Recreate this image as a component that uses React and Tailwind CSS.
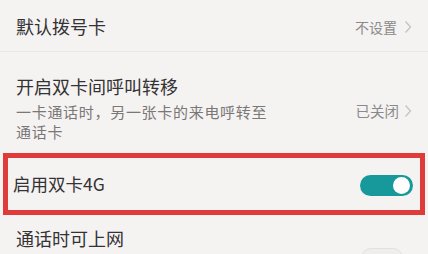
export default function App() {
  const font = { fontFamily: '"Noto Sans CJK SC", "Noto Sans", sans-serif' };
  return (
    <div className="w-[428px] h-[254px] overflow-hidden bg-[#f5f2f2] flex flex-col" style={font}>
      <div className="shrink-0 h-[52px] px-4 flex items-center justify-between border-b border-[#ebe7e7]">
        <span className="text-[18px] leading-6 text-[#333]">默认拨号卡</span>
        <div className="flex items-center gap-[7px] pt-[2px]">
          <span className="text-[14px] leading-5 text-[#8a8a8a]">不设置</span>
          <svg width="8" height="14" viewBox="0 0 8 14" fill="none">
            <path d="M1.5 1.5 L6.5 7 L1.5 12.5" stroke="#c8c4c4" strokeWidth="1.4" />
          </svg>
        </div>
      </div>
      <div className="shrink-0 h-[101px] px-4 pt-[22px] flex justify-between">
        <div className="flex flex-col">
          <span className="text-[18px] leading-6 text-[#333]">开启双卡间呼叫转移</span>
          <span className="mt-[4px] max-w-[262px] text-[15px] tracking-[0.7px] leading-5 text-[#7a7777]">
            一卡通话时，另一张卡的来电呼转至通话卡
          </span>
        </div>
        <div className="flex items-center gap-[5px] self-start mt-[27px]">
          <span className="text-[14.5px] leading-5 text-[#8a8a8a]">已关闭</span>
          <svg width="8" height="14" viewBox="0 0 8 14" fill="none">
            <path d="M1.5 1.5 L6.5 7 L1.5 12.5" stroke="#c8c4c4" strokeWidth="1.4" />
          </svg>
        </div>
      </div>
      <div className="shrink-0 mx-[3px] h-[62px] border-[5px] border-[#e03b3b] pl-[5px] pr-[7px] flex items-center justify-between">
        <span className="text-[17.5px] leading-6 text-[#333]">启用双卡4G</span>
        <div className="w-[53px] h-[21px] rounded-full bg-[#17989a] flex items-center justify-end pr-[3px] mt-[2px]">
          <div className="w-[17px] h-[17px] rounded-full bg-white"></div>
        </div>
      </div>
      <div className="shrink-0 px-4 pt-[11px] flex justify-between">
        <span className="text-[18px] leading-6 text-[#333]">通话时可上网</span>
        <div className="mt-[22px] mr-[9px] w-[42px] h-[20px] rounded-full border border-[#e4e0e0] bg-[#f0eded]"></div>
      </div>
    </div>
  );
}
